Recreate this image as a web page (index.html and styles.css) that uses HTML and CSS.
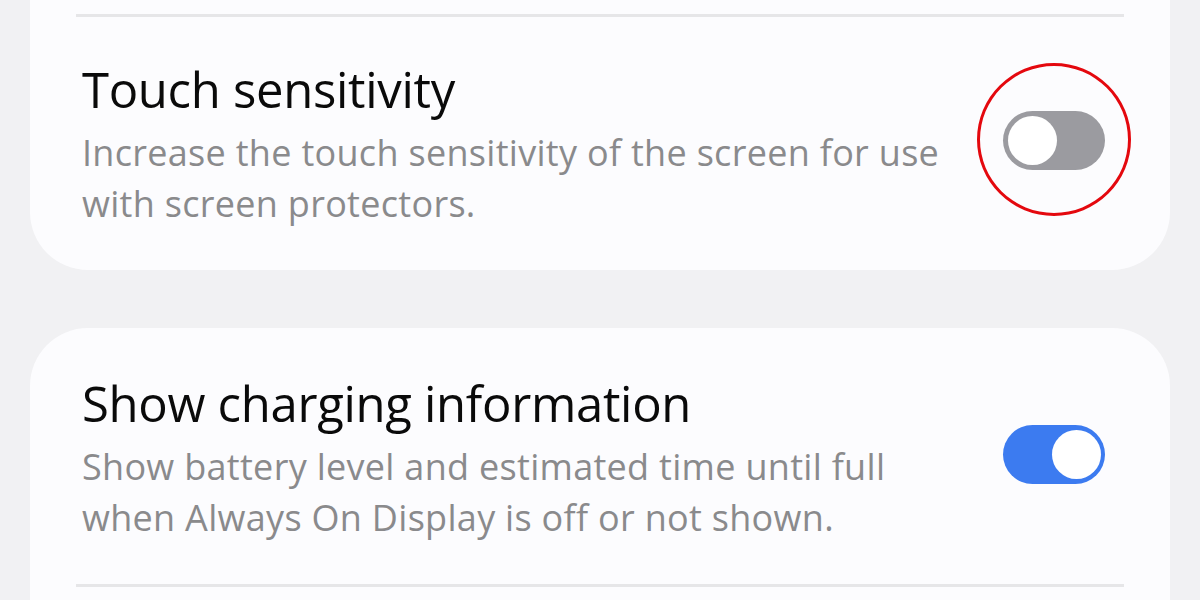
FILE: index.html
```html
<!DOCTYPE html>
<html>
<head>
<meta charset="utf-8">
<link rel="stylesheet" href="styles.css">
</head>
<body>
<div class="page">
  <section class="card card-top">
    <div class="divider"></div>
    <div class="row">
      <div class="text">
        <div class="title">Touch sensitivity</div>
        <div class="sub">Increase the touch sensitivity of the screen for use with screen protectors.</div>
      </div>
      <div class="toggle-wrap">
        <div class="toggle off"><span class="knob"></span></div>
        <div class="highlight"></div>
      </div>
    </div>
  </section>
  <section class="card card-bottom">
    <div class="row row2">
      <div class="text">
        <div class="title">Show charging information</div>
        <div class="sub">Show battery level and estimated time until full when Always On Display is off or not shown.</div>
      </div>
      <div class="toggle-wrap">
        <div class="toggle on"><span class="knob"></span></div>
      </div>
    </div>
    <div class="divider"></div>
  </section>
</div>
</body>
</html>
```
FILE: styles.css
```css
html, body {
  margin: 0;
  padding: 0;
  background: #f1f1f3;
  font-family: "Open Sans", "Noto Sans", sans-serif;
  overflow: hidden;
}
.page {
  width: 1200px;
  height: 600px;
  padding: 0 30px;
  box-sizing: border-box;
  display: flex;
  flex-direction: column;
  gap: 58px;
}
.card {
  background: #fcfcfe;
  padding: 0 46px 0 52px;
}
.card-top {
  border-radius: 0 0 58px 58px;
  padding-top: 14px;
  height: 256px;
}
.card-bottom {
  border-radius: 58px 58px 0 0;
  flex: 1;
}
.divider {
  height: 3px;
  background: #e6e6e8;
  margin-left: -6px;
}
.row {
  display: flex;
  align-items: center;
  justify-content: space-between;
  padding-top: 42px;
}
.row2 {
  padding-top: 45px;
  padding-bottom: 41px;
}
.text {
  width: 870px;
}
.title {
  font-size: 49px;
  line-height: 60px;
  color: #0a0a0a;
  letter-spacing: -0.3px;
}
.sub {
  font-size: 36px;
  line-height: 51px;
  color: #8a8a8c;
  margin-top: 8px;
  letter-spacing: 0.3px;
}
.toggle-wrap {
  position: relative;
  width: 102px;
  height: 59px;
  margin-right: 19px;
  margin-bottom: 7px;
}
.toggle {
  width: 102px;
  height: 59px;
  border-radius: 30px;
  box-sizing: border-box;
  padding: 5px;
  display: flex;
}
.toggle.off { background: #9b9ba0; justify-content: flex-start; }
.toggle.on { background: #3c7bf0; justify-content: flex-end; padding-right: 4px; }
.knob {
  width: 49px;
  height: 49px;
  border-radius: 50%;
  background: #fff;
}
.highlight {
  position: absolute;
  left: -26px;
  top: -48px;
  width: 148px;
  height: 147px;
  border: 3px solid #e4080e;
  border-radius: 50%;
}
```
